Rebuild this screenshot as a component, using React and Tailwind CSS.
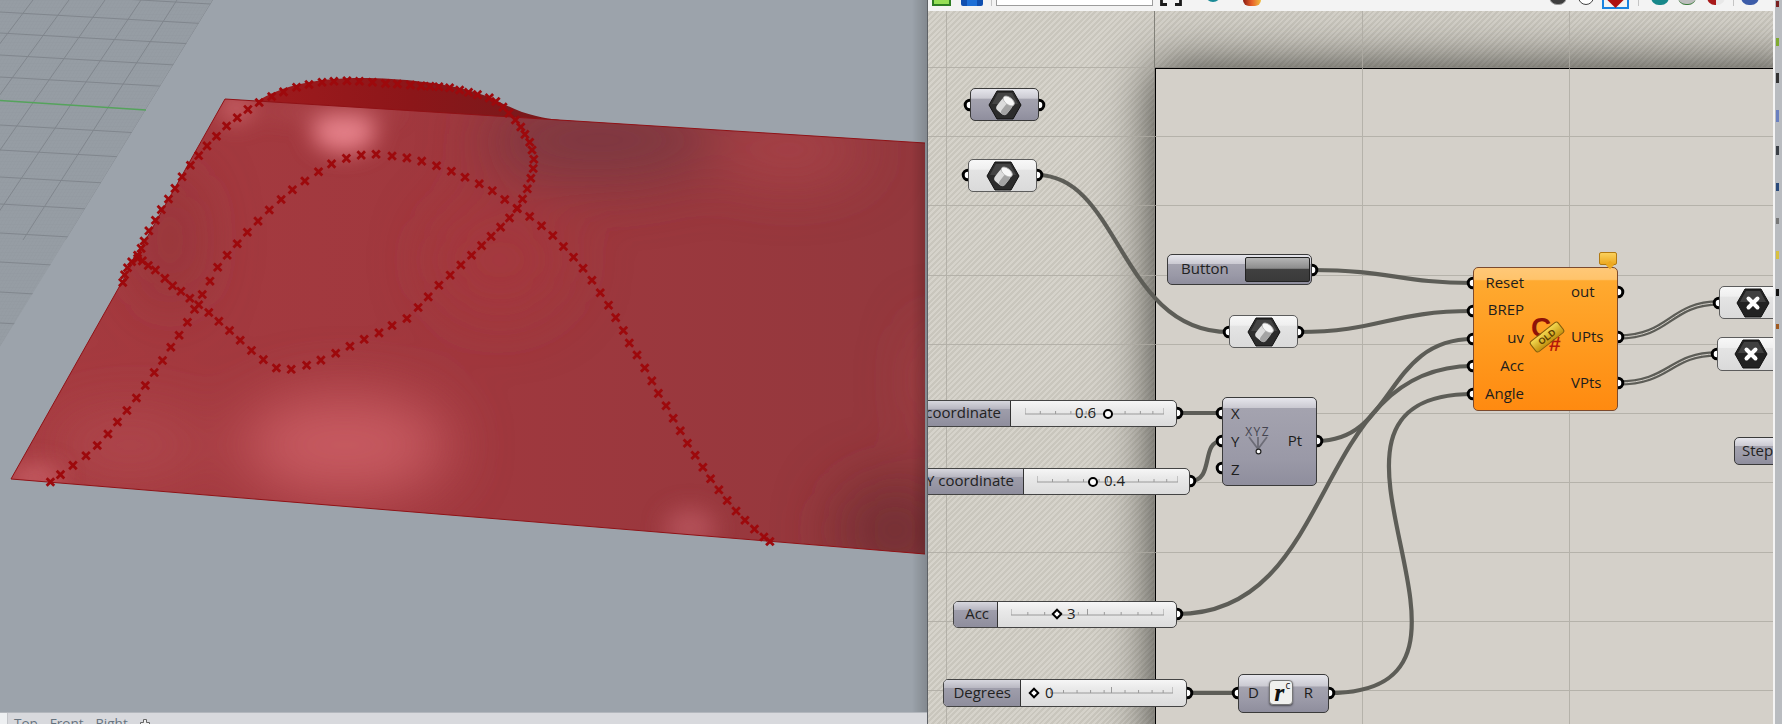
import React from 'react';

const FONT = "font-['Open_Sans','Noto_Sans',sans-serif]";
const GREY = 'bg-[linear-gradient(to_bottom,#e6e6ec_0%,#cbcad2_30%,#a4a3af_32%,#9a99a7_70%,#8f8e9d_100%)] border border-[#3a3a3a]';
const WHITE = 'bg-[linear-gradient(to_bottom,#f8f8f8_0%,#efefef_30%,#e4e4e4_32%,#dadada_100%)] border border-[#5c5c5c]';

// traced from the picture, in a 1.686 x 2.166 stretched space
const curveA = [[85,1044],[102,1028],[123,1008],[145,987],[164,965],[182,940],[198,914],[214,889],[230,862],[245,835],[260,807],[274,781],[288,752],[302,726],[316,698],[328,670],[341,638],[354,609],[367,579],[383,553],[400,528],[417,503],[435,479],[454,455],[474,432],[493,411],[514,392],[537,372],[559,355],[584,343],[609,336],[634,334],[661,338],[686,342],[711,349],[736,359],[761,371],[784,384],[808,398],[830,413],[851,432],[872,451],[893,469],[913,489],[932,510],[950,534],[967,557],[983,581],[998,607],[1012,634],[1026,661],[1038,688],[1051,716],[1061,743],[1074,769],[1087,797],[1099,825],[1110,852],[1123,879],[1135,906],[1147,933],[1159,960],[1172,986],[1185,1012],[1198,1037],[1212,1061],[1226,1084],[1241,1107],[1256,1127],[1272,1146],[1288,1163],[1298,1173]];
const curveB = [[207,612],[210,595],[215,580],[222,567],[232,560],[240,565],[250,575],[262,585],[278,603],[291,619],[305,631],[320,646],[335,660],[352,677],[369,696],[387,716],[405,737],[424,759],[444,779],[466,797],[491,800],[517,791],[541,780],[566,765],[590,750],[614,735],[639,721],[661,705],[686,690],[705,666],[722,643],[740,618],[759,596],[777,574],[795,553],[812,532],[828,512],[844,492],[859,472],[872,452],[881,431],[889,409],[895,386],[899,365],[900,345],[897,325],[893,308],[885,291],[878,275],[869,260],[858,245],[848,232],[836,220],[825,212],[805,205],[790,200],[775,195],[758,190],[740,188],[725,187],[710,186],[692,184],[670,182],[650,181],[628,178],[606,176],[585,175],[563,176],[543,178],[521,183],[500,189],[478,199],[458,209],[437,222],[418,237],[400,255],[382,273],[365,295],[349,316],[335,337],[321,358],[307,383],[295,408],[284,431],[272,454],[262,477],[251,500],[243,522],[238,538],[232,553]];

const marks = [...curveA, ...curveB].map(([x, y]) => [x / 1.686, y / 2.166]);

const broadShade = [
  [345, 445, 105, 50, '#cf6268', 0.85],
  [130, 445, 80, 30, '#b85258', 0.6],
  [600, 140, 120, 42, '#7a3a41', 0.95],
  [790, 150, 75, 28, '#b04a50', 0.7],
  [895, 530, 60, 50, '#6c2f34', 0.85],
  [940, 380, 20, 60, '#b04a50', 0.5],
  [170, 240, 30, 70, '#8a3338', 0.5],
  [500, 260, 70, 60, '#a8393e', 0.5],
];
const tightShade = [
  [344, 132, 32, 20, '#ea858e', 0.95],
  [690, 528, 26, 20, '#c4606a', 0.6],
  [35, 478, 28, 14, '#d06a70', 0.7],
  [236, 108, 18, 14, '#d06a70', 0.8],
  [330, 112, 70, 7, '#b8575c', 0.6],
];

const gridRows = [-8, 12, 33, 55, 77, 125, 150, 177, 204, 233, 262, 292, 323];

function Viewport() {
  return (
    <svg className="absolute inset-0 w-full h-full" viewBox="0 0 927 712" preserveAspectRatio="none">
      <defs>
        <pattern id="fine" width="3.5" height="3.5" patternUnits="userSpaceOnUse" patternTransform="skewX(-30)">
          <path d="M0 0H3.5M0 0V3.5" stroke="#8b9299" strokeWidth="0.6" fill="none" />
        </pattern>
        <clipPath id="plane"><polygon points="0,0 213,0 0,347" /></clipPath>
        <clipPath id="sheet"><path d="M225 99L925 143V554L11 479Z" /></clipPath>
        <linearGradient id="base" x1="0" x2="1" y1="0" y2="0">
          <stop offset="0" stopColor="#a63b40" />
          <stop offset="0.5" stopColor="#a0383e" />
          <stop offset="1" stopColor="#93383d" />
        </linearGradient>
        <linearGradient id="back" x1="0" x2="1" y1="0" y2="0">
          <stop offset="0" stopColor="#a01b1e" />
          <stop offset="0.5" stopColor="#8c1619" />
          <stop offset="1" stopColor="#741a1c" />
        </linearGradient>
        <linearGradient id="edge" x1="0" x2="1" y1="0" y2="0">
          <stop offset="0" stopColor="#000" stopOpacity="0" />
          <stop offset="1" stopColor="#000" stopOpacity="0.16" />
        </linearGradient>
        <filter id="wide" x="-60%" y="-80%" width="220%" height="260%"><feGaussianBlur stdDeviation="30" /></filter>
        <filter id="tight" x="-60%" y="-100%" width="220%" height="300%"><feGaussianBlur stdDeviation="11" /></filter>
      </defs>

      <g clipPath="url(#plane)">
        <polygon points="0,0 213,0 0,347" fill="#969da4" />
        <polygon points="0,0 213,0 0,347" fill="url(#fine)" opacity="0.55" />
        {gridRows.map((y) => (
          <line key={y} x1="0" y1={y} x2="240" y2={y + 13.7} stroke="#80868d" strokeWidth="1" />
        ))}
        {[0, 1, 2, 3, 4, 5, 6, 7].map((i) => (
          <line key={i} x1={213 - 36 * i} y1="0" x2={66 - 43 * i} y2="240" stroke="#80868d" strokeWidth="1" />
        ))}
      </g>
      <line x1="0" y1="100.5" x2="146" y2="110" stroke="#55a35c" strokeWidth="1.6" />

      <path d="M250 106C280 84 320 78 362 78C400 78 445 83 474 92C495 98 505 106 522 112C540 118 556 120 572 121L500 125Z" fill="url(#back)" />
      <path d="M225 99L925 143V554L11 479Z" fill="url(#base)" />
      <g clipPath="url(#sheet)">
        <g filter="url(#wide)">
          {broadShade.map(([cx, cy, rx, ry, c, o]) => (
            <ellipse key={cx} cx={cx} cy={cy} rx={rx} ry={ry} fill={c} opacity={o} />
          ))}
        </g>
        <g filter="url(#tight)">
          {tightShade.map(([cx, cy, rx, ry, c, o]) => (
            <ellipse key={cx} cx={cx} cy={cy} rx={rx} ry={ry} fill={c} opacity={o} />
          ))}
        </g>
      </g>
      <path d="M225 99L925 143M925 554L11 479L225 99" stroke="#8f1216" strokeWidth="1" fill="none" />

      <g stroke="#9d090c" strokeWidth="2.8" strokeLinecap="square">
        {marks.map(([x, y], i) => (
          <path key={i} d={`M${x - 2.8} ${y - 2.8}L${x + 2.8} ${y + 2.8}M${x + 2.8} ${y - 2.8}L${x - 2.8} ${y + 2.8}`} />
        ))}
      </g>
      <rect x="912" y="0" width="15" height="712" fill="url(#edge)" />
    </svg>
  );
}

function Wires() {
  const ports = [
    [970, 105], [1039, 105], [968, 175], [1037, 175], [1312, 270], [1229, 332], [1298, 332],
    [1473, 283], [1473, 311], [1473, 339], [1473, 366], [1473, 394],
    [1618, 292], [1618, 337], [1618, 383], [1719, 303], [1717, 354],
    [1177, 413], [1190, 481], [1222, 413], [1222, 441], [1222, 468], [1317, 441],
    [1177, 614], [1187, 693], [1238, 693], [1329, 693],
  ];
  const single = [
    'M1037 175C1120 175 1120 332 1229 332',
    'M1312 270C1390 270 1400 283 1473 283',
    'M1298 332C1380 332 1390 311 1473 311',
    'M1317 441C1395 441 1385 339 1473 339',
    'M1177 614C1340 614 1310 366 1473 366',
    'M1329 693C1535 693 1265 394 1473 394',
    'M1177 413H1222',
    'M1190 481C1215 481 1200 441 1222 441',
    'M1187 693H1238',
  ];
  const double = [
    'M1618 337C1670 337 1670 303 1719 303',
    'M1618 383C1670 383 1670 354 1717 354',
  ];
  return (
    <svg className="absolute inset-0 w-full h-full" viewBox="928 11 845 713">
      <g stroke="#aeaba3" strokeWidth="1" opacity="0.8">
        {[946, 1154, 1362, 1569].map((x) => <line key={x} x1={x + 0.5} y1="11" x2={x + 0.5} y2="724" />)}
        {[67, 136, 205, 275, 344, 413, 482, 552, 621, 690].map((y) => <line key={y} x1="928" y1={y + 0.5} x2="1773" y2={y + 0.5} />)}
      </g>
      <line x1="1154.5" y1="11" x2="1154.5" y2="67" stroke="#6d6d66" opacity="0.7" />
      <g fill="none" stroke="#5d5d57" strokeWidth="4.2">
        {single.map((d) => <path key={d} d={d} />)}
      </g>
      <g fill="none">
        {double.map((d) => (
          <g key={d}>
            <path d={d} stroke="#5d5d57" strokeWidth="5.4" />
            <path d={d} stroke="#d4d0c9" strokeWidth="1" />
          </g>
        ))}
      </g>
      {ports.map(([x, y]) => (
        <circle key={`${x}-${y}`} cx={x} cy={y} r="4.8" fill="#fff" stroke="#000" strokeWidth="3" />
      ))}
    </svg>
  );
}

function HexIcon({ cross }) {
  return (
    <svg width="34" height="32" viewBox="0 0 34 32">
      <polygon points="9,2 25,2 33,16 25,30 9,30 1,16" fill={cross ? '#222' : '#2c2c2c'} stroke="#111" strokeWidth="1" />
      <polygon points="10,4 24,4 30,15 4,15" fill="#5a5a5a" opacity="0.55" />
      {cross ? (
        <path d="M12.5 11.5L21.5 20.5M21.5 11.5L12.5 20.5" stroke="#fff" strokeWidth="4" strokeLinecap="round" />
      ) : (
        <g transform="rotate(-52 17 16)">
          <rect x="8" y="10" width="15" height="13" rx="4" fill="#dcdcdc" />
          <rect x="8" y="16.5" width="13" height="6.5" rx="3" fill="#a4a4a4" />
          <ellipse cx="22.5" cy="16.5" rx="3.6" ry="6.5" fill="#f7f7f7" stroke="#b5b5b5" strokeWidth="0.8" />
        </g>
      )}
    </svg>
  );
}

function HexParam({ className, tone }) {
  return (
    <div className={`absolute rounded-[5px] flex items-center justify-center ${tone} ${className}`}>
      <HexIcon />
    </div>
  );
}

function Ticks({ className }) {
  return (
    <svg className={`absolute top-[7px] h-[7px] ${className}`} viewBox="0 0 100 7" preserveAspectRatio="none">
      <path d="M0 0V6H100V0M11 3V6M22 3V6M33 3V6M44 3V6M50 0V6M61 3V6M72 3V6M83 3V6M92 3V6" stroke="#9a9a9a" strokeWidth="1" vectorEffect="non-scaling-stroke" fill="none" />
    </svg>
  );
}

function Grip({ className, diamond }) {
  if (diamond) {
    return <div className={`absolute w-[8px] h-[8px] rotate-45 bg-white border-2 border-black ${className}`} />;
  }
  return <div className={`absolute w-[10px] h-[10px] rounded-full bg-white border-[2.5px] border-black ${className}`} />;
}

function Slider({ className, labelClass, label, children }) {
  return (
    <div className={`absolute flex rounded-[5px] overflow-hidden bg-[linear-gradient(to_bottom,#f6f6f6_0%,#e9e9e9_35%,#dcdcdc_100%)] border border-[#444] ${className}`}>
      <div className={`flex items-center justify-end pr-[9px] pb-[2px] shrink-0 whitespace-nowrap text-[15px] text-[#222] border-r border-[#333] bg-[linear-gradient(to_bottom,#d7d7de_0%,#b9b8c2_30%,#9f9eab_32%,#8f8e9d_100%)] ${labelClass}`}>
        {label}
      </div>
      <div className="relative flex-1">{children}</div>
    </div>
  );
}

function PortRows({ className, rowClass, items }) {
  return (
    <div className={`flex flex-col text-[15px] text-[#1d1d1d] ${className}`}>
      {items.map((t) => <span key={t} className={`flex items-center ${rowClass}`}>{t}</span>)}
    </div>
  );
}

function CSharpNode() {
  return (
    <div className="absolute left-[545px] top-[256px] w-[145px] h-[144px] flex rounded-[5px] border border-[#7b4a2e] bg-[linear-gradient(to_bottom,#ffc877_0%,#ffc36b_8%,#ffaa30_9%,#ff9a1e_55%,#ff8a10_100%)]">
      <PortRows className="w-[50px] items-end" rowClass="h-[27.75px]" items={['Reset', 'BREP', 'uv', 'Acc', 'Angle']} />
      <div className="relative w-[47px] shrink-0">
        <span className="absolute left-[7px] top-[46px] text-[28px] leading-none font-bold text-[#8e1208] font-['Liberation_Sans',sans-serif]">C</span>
        <span className="absolute left-[25px] top-[65px] text-[21px] leading-none font-bold text-[#b5180a] font-['Liberation_Sans',sans-serif]">#</span>
        <div className="absolute left-[5px] top-[62px] w-[36px] h-[14px] -rotate-[38deg] rounded-[3px] border border-[#80600e] bg-[linear-gradient(to_bottom,#f3d850,#c4930f)] flex items-center justify-center text-[9px] leading-none font-bold text-[#5c3c00] font-['Liberation_Sans',sans-serif]">
          OLD
        </div>
      </div>
      <PortRows className="" rowClass="h-[45.5px]" items={['out', 'UPts', 'VPts']} />
    </div>
  );
}

function Bubble() {
  return (
    <div className="absolute left-[671px] top-[241px] w-[18px] h-[13px] rounded-[2px] border border-[#b37a10] bg-[linear-gradient(to_bottom,#fbd15c,#eda921)]">
      <div className="absolute right-[3px] -bottom-[4px] w-[6px] h-[6px] rotate-45 bg-[#eda921]" />
    </div>
  );
}

function XyzNode() {
  return (
    <div className="absolute left-[294px] top-[386px] w-[95px] h-[89px] flex rounded-[5px] border border-[#3a3a3a] bg-[linear-gradient(to_bottom,#e6e6ec_0%,#cbcad2_11%,#a4a3af_12%,#9a99a7_70%,#8f8e9d_100%)]">
      <PortRows className="pl-[8px] pt-[1px]" rowClass="h-[28px]" items={['X', 'Y', 'Z']} />
      <div className="relative flex-1">
        <span className="absolute left-[-2px] top-[28px] w-[40px] text-center text-[12px] leading-none tracking-[1.5px] text-[#44444f]">XYZ</span>
        <svg className="absolute left-[4px] top-[38px]" width="28" height="20" viewBox="0 0 28 20">
          <path d="M5 1L14 13M14 1V13M23 1L14 13" stroke="#5c5c66" strokeWidth="1.8" fill="none" opacity="0.75" />
          <circle cx="14.5" cy="15.5" r="2.4" fill="#fff" stroke="#222" strokeWidth="1.2" />
        </svg>
      </div>
      <span className="self-center -mt-[3px] mr-[14px] text-[15px] text-[#1d1d1d]">Pt</span>
    </div>
  );
}

function RadNode() {
  return (
    <div className={`absolute left-[310px] top-[663px] w-[91px] h-[39px] flex items-center justify-between pl-[9px] pr-[15px] pb-[2px] rounded-[5px] text-[15px] text-[#1d1d1d] ${GREY}`}>
      <span>D</span>
      <div className="relative w-[24px] h-[25px] rounded-[4px] bg-[#f0f0ee] border border-[#777] shadow-[0_1px_2px_rgba(0,0,0,0.5)]">
        <span className="absolute left-[4px] -top-[1px] text-[26px] leading-none italic font-bold text-[#111] font-['Liberation_Serif',serif]">r</span>
        <span className="absolute right-[2px] -top-[1px] text-[10px] leading-none text-[#111]">c</span>
      </div>
      <span>R</span>
    </div>
  );
}

function Toolbar() {
  return (
    <div className="h-[11px] shrink-0 bg-[#f3f3f3] flex items-end pb-[5px] overflow-hidden">
      <div className="ml-[4px] w-[19px] h-[12px] shrink-0 border-2 border-[#2d7d22] bg-[#96de56]" />
      <div className="ml-[10px] w-[22px] h-[12px] shrink-0 rounded-[2px] bg-[#1d6fd6] border-x-[6px] border-[#0f4fb0]" />
      <div className="ml-[8px] w-[1px] h-[20px] shrink-0 bg-[#c4c4c4]" />
      <div className="ml-[4px] w-[157px] h-[12px] shrink-0 bg-white border border-[#9c9c9c]" />
      <svg className="ml-[7px] shrink-0" width="22" height="6" viewBox="0 0 22 6">
        <path d="M1.5 0V4.5H7M15 4.5H20.5V0" stroke="#1b1b1b" strokeWidth="2.8" fill="none" />
      </svg>
      <div className="ml-[23px] w-[16px] h-[16px] mb-[4px] shrink-0 rounded-full bg-[#1a8a96]" />
      <div className="ml-[22px] w-[18px] h-[12px] shrink-0 rounded-full bg-[linear-gradient(to_right,#8a1a10,#e8622a,#f0c040)]" />
      <div className="ml-[288px] w-[18px] h-[16px] mb-[1px] shrink-0 rounded-full bg-[#3e3e3e] border border-[#999]" />
      <div className="ml-[11px] w-[16px] h-[16px] mb-[1px] shrink-0 rounded-full bg-white border border-[#444]" />
      <div className="ml-[8px] w-[27px] h-[12px] -mb-[3px] shrink-0 border-2 border-[#1a83e0] flex justify-center items-end pb-[2px]">
        <div className="w-[15px] h-[15px] shrink-0 rotate-45 bg-[#b01010]" />
      </div>
      <div className="ml-[9px] w-[1px] h-[20px] shrink-0 bg-[#c4c4c4]" />
      <div className="ml-[12px] w-[18px] h-[16px] mb-[1px] shrink-0 rounded-full bg-[#18888a]" />
      <div className="ml-[9px] w-[18px] h-[16px] mb-[1px] shrink-0 rounded-full bg-[#bdbdbd] border-b border-[#3a7a3a]" />
      <div className="ml-[11px] w-[18px] h-[16px] mb-[1px] shrink-0 rounded-full bg-[linear-gradient(to_right,#a81818_50%,#e8e8e8_50%)]" />
      <div className="ml-[8px] w-[1px] h-[20px] shrink-0 bg-[#c4c4c4]" />
      <div className="ml-[7px] w-[18px] h-[16px] mb-[1px] shrink-0 rounded-full bg-[#3c5ca8]" />
    </div>
  );
}

function SideStrip() {
  const bits = [
    'mt-[1px] h-[6px] bg-[#7a2020]', 'mt-[31px] h-[8px] bg-[#7faa30]', 'mt-[27px] h-[10px] bg-[#333]',
    'mt-[27px] h-[12px] bg-[#6a80c0]', 'mt-[24px] h-[9px] bg-[#3a3f46]', 'mt-[28px] h-[8px] bg-[#2a4a7a]',
    'mt-[27px] h-[6px] bg-[#777]', 'mt-[27px] h-[8px] bg-[#d8c040]', 'mt-[30px] h-[7px] bg-[#111]',
    'mt-[28px] h-[5px] bg-[#a05a20]',
  ];
  return (
    <div className="w-[9px] shrink-0 flex border-l-2 border-[#f4f4f4] bg-[#b9bcc0]">
      <div className="flex flex-col ml-[1px] w-[3px]">
        {bits.map((b) => <div key={b} className={`w-[3px] shrink-0 ${b}`} />)}
      </div>
    </div>
  );
}

export default function App() {
  return (
    <div className={`w-[1782px] h-[724px] flex overflow-hidden ${FONT}`}>
      <div className="w-[927px] shrink-0 flex flex-col bg-[#9ca3ab]">
        <div className="relative flex-1 overflow-hidden">
          <Viewport />
        </div>
        <div className="h-[12px] shrink-0 flex overflow-hidden bg-[#d8d9dd] border-t border-[#b3b7bd] text-[13.5px] leading-[18px] text-[#66737f]">
          <div className="w-[8px] shrink-0 bg-[#eef0f2] border-r border-[#c4c6ca]" />
          <span className="ml-[6px] mt-[1px]">Top</span>
          <span className="ml-[12px] mt-[1px]">Front</span>
          <span className="ml-[12px] mt-[1px]">Right</span>
          <svg className="ml-[12px] mt-[6px] shrink-0" width="10" height="10" viewBox="0 0 10 10">
            <path d="M3.5 .5H6.5V3.5H9.5V6.5H6.5V9.5H3.5V6.5H.5V3.5H3.5Z" fill="#eee" stroke="#666" />
          </svg>
        </div>
      </div>
      <div className="w-[1px] shrink-0 bg-[#5e6166]" />

      <div className="w-[845px] shrink-0 flex flex-col">
        <Toolbar />
        <div className="relative flex-1 overflow-hidden bg-[repeating-linear-gradient(135deg,#d6d3cb_0px,#d6d3cb_2px,#c9c6bd_2px,#c9c6bd_4px)]">
          <div className="absolute left-[226px] top-[56px] -right-[40px] -bottom-[40px] bg-[#d4d0c9] border-t-2 border-l-2 border-black shadow-[0_0_50px_0_rgba(40,40,35,0.9)]" />
          <Wires />

          <HexParam tone={GREY} className="left-[42px] top-[77px] w-[69px] h-[33px]" />
          <HexParam tone={WHITE} className="left-[40px] top-[148px] w-[69px] h-[33px]" />
          <HexParam tone={WHITE} className="left-[301px] top-[304px] w-[69px] h-[33px]" />

          <div className={`absolute left-[239px] top-[243px] w-[145px] h-[31px] rounded-[5px] flex items-center justify-between pl-[13px] pr-[1px] ${GREY}`}>
            <span className="text-[15px] text-[#222] -mt-[2px]">Button</span>
            <div className="w-[65px] h-[25px] rounded-[2px] border border-[#222] bg-[linear-gradient(to_bottom,#b5b5b5_0%,#8c8c8c_45%,#404040_48%,#3a3a3a_100%)]" />
          </div>

          <CSharpNode />
          <Bubble />

          <div className={`absolute left-[791px] top-[275px] w-[90px] h-[33px] rounded-[5px] flex items-center pl-[16px] ${WHITE}`}>
            <HexIcon cross />
          </div>
          <div className={`absolute left-[789px] top-[326px] w-[90px] h-[34px] rounded-[5px] flex items-center pl-[16px] ${WHITE}`}>
            <HexIcon cross />
          </div>
          <div className={`absolute left-[806px] top-[426px] w-[80px] h-[28px] rounded-[5px] flex items-center pl-[7px] pb-[2px] text-[15px] text-[#222] ${GREY}`}>
            Step
          </div>

          <Slider className="-left-[30px] top-[389px] w-[279px] h-[27px]" labelClass="w-[112px]" label="X coordinate">
            <Ticks className="left-[14px] w-[139px]" />
            <span className="absolute left-[64px] top-[1px] text-[15px] leading-[20px] text-[#222]">0.6</span>
            <Grip className="left-[92px] top-[8px]" />
          </Slider>
          <Slider className="-left-[20px] top-[457px] w-[282px] h-[27px]" labelClass="w-[115px]" label="Y coordinate">
            <Ticks className="left-[13px] w-[141px]" />
            <Grip className="left-[64px] top-[8px]" />
            <span className="absolute left-[80px] top-[1px] text-[15px] leading-[20px] text-[#222]">0.4</span>
          </Slider>
          <Slider className="left-[25px] top-[590px] w-[224px] h-[27px]" labelClass="w-[44px] !pr-[8px]" label="Acc">
            <Ticks className="left-[13px] w-[153px]" />
            <Grip diamond className="left-[55px] top-[8px]" />
            <span className="absolute left-[69px] top-[1px] text-[15px] leading-[20px] text-[#222]">3</span>
          </Slider>
          <Slider className="left-[15px] top-[668px] w-[244px] h-[28px]" labelClass="w-[77px]" label="Degrees">
            <Ticks className="left-[29px] w-[123px]" />
            <Grip diamond className="left-[9px] top-[9px]" />
            <span className="absolute left-[24px] top-[2px] text-[15px] leading-[20px] text-[#222]">0</span>
          </Slider>

          <XyzNode />
          <RadNode />
        </div>
      </div>

      <SideStrip />
    </div>
  );
}
